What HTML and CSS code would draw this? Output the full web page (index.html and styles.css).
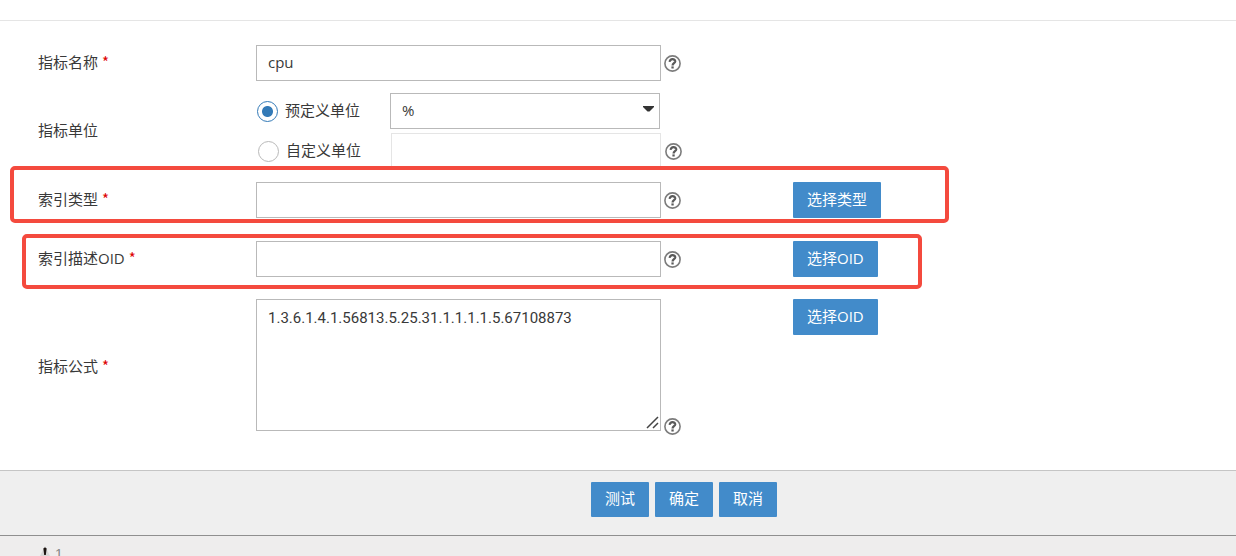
FILE: index.html
```
<!DOCTYPE html>
<html lang="zh-CN">
<head>
  <meta charset="UTF-8" />
  <meta name="viewport" content="width=device-width, initial-scale=1" />
  <title>指标设置</title>
  <link rel="stylesheet" href="styles.css">
</head>
<body>
  <svg class="symbols" aria-hidden="true">
    <symbol id="help" viewBox="0 0 17 17">
      <circle cx="8.5" cy="8.5" r="7.6" fill="#fff" stroke="#7c7c7c" stroke-width="1.6" />
      <path d="M5.8 6.9C5.6 3.4 11.3 3.4 11.2 6.4C11.1 8.2 8.6 8.2 8.6 10.4" fill="none" stroke="#5a5a5a" stroke-width="2.3" />
      <rect x="7.4" y="11.4" width="2.3" height="2.1" fill="#5a5a5a" />
    </symbol>
  </svg>

  <form class="page" onsubmit="return false;">
    <div class="top-line"></div>

    <main class="form">
      <div class="row">
        <label class="label" for="name">指标名称 <span class="required">*</span></label>
        <div class="field">
          <input class="text-box" type="text" id="name" name="name" value="cpu" />
          <svg class="help" role="img" aria-label="帮助"><use href="#help" /></svg>
        </div>
      </div>

      <div class="row row-unit" role="radiogroup" aria-labelledby="unit-label">
        <span class="label" id="unit-label">指标单位</span>
        <div class="units">
          <div class="field">
            <label class="radio"><input type="radio" name="unit" value="preset" checked /> <span>预定义单位</span></label>
            <div class="select-wrap">
              <select class="text-box" aria-label="预定义单位">
                <option>%</option>
              </select>
              <svg class="arrow" viewBox="0 0 11 6" aria-hidden="true"><path d="M0 0H11V1L6.5 5.5H4.5L0 1Z" fill="#333" /></svg>
            </div>
          </div>
          <div class="field field-custom">
            <label class="radio"><input type="radio" name="unit" value="custom" /> <span>自定义单位</span></label>
            <input class="text-box unit-box" type="text" aria-label="自定义单位" disabled />
            <svg class="help" role="img" aria-label="帮助"><use href="#help" /></svg>
          </div>
        </div>
      </div>

      <div class="row row-type">
        <label class="label" for="index-type">索引类型 <span class="required">*</span></label>
        <div class="field">
          <input class="text-box" type="text" id="index-type" name="index-type" />
          <svg class="help" role="img" aria-label="帮助"><use href="#help" /></svg>
        </div>
        <button class="btn" type="button">选择类型</button>
        <div class="mark mark-type"></div>
      </div>

      <div class="row row-oid">
        <label class="label" for="index-oid">索引描述OID <span class="required">*</span></label>
        <div class="field">
          <input class="text-box" type="text" id="index-oid" name="index-oid" />
          <svg class="help" role="img" aria-label="帮助"><use href="#help" /></svg>
        </div>
        <button class="btn" type="button">选择OID</button>
        <div class="mark mark-oid"></div>
      </div>

      <div class="row row-formula">
        <label class="label" for="formula">指标公式 <span class="required">*</span></label>
        <div class="field field-area">
          <textarea class="text-box area" id="formula" name="formula" spellcheck="false">1.3.6.1.4.1.56813.5.25.31.1.1.1.1.5.67108873</textarea>
          <svg class="help" role="img" aria-label="帮助"><use href="#help" /></svg>
        </div>
        <button class="btn" type="button">选择OID</button>
      </div>
    </main>

    <div class="actions">
      <button class="btn" type="button">测试</button>
      <button class="btn" type="submit">确定</button>
      <button class="btn" type="button">取消</button>
    </div>

    <footer class="status">
      <svg class="warning" viewBox="0 0 14 14" aria-hidden="true">
        <path d="M7 0L14 14H0Z" fill="#d8d8d8" />
        <path d="M5.4 2.5Q7 0.5 8.6 2.5L7.8 9H6.2Z" fill="#1d1512" />
      </svg>
      <span>1</span>
    </footer>
  </form>
</body>
</html>
```

FILE: styles.css
```
:root {
  --color-primary: #428bca;
  --color-radio: #337ab7;
  --color-text: #393939;
  --color-border: #b9b9b9;
  --color-required: #dd0000;
  --color-mark: #f44a3e;
  --color-bar: #efefef;
  --font-body: "Open Sans", "Noto Sans CJK SC", sans-serif;
}

*, *::before, *::after {
  box-sizing: border-box;
}

body {
  margin: 0;
  font-family: var(--font-body);
  font-size: 15px;
  line-height: 20px;
  color: var(--color-text);
  background: #fff;
}

.symbols {
  display: none;
}

.page {
  display: flex;
  flex-direction: column;
  height: 100vh;
}

.top-line {
  flex: none;
  height: 21px;
  border-bottom: 1px solid #e5e5e5;
}

.form {
  flex: none;
  padding: 24px 38px 35px;
}

.row {
  position: relative;
  display: grid;
  grid-template-columns: 218px minmax(0, 537px) 1fr;
  align-items: center;
}
.row-unit {
  margin-top: 12px;
}
.row-type {
  margin-top: 13px;
}
.row-oid {
  margin-top: 23px;
}
.row-formula {
  margin-top: 22px;
}

.label,
.radio span {
  padding-bottom: 2px;
}
.required {
  font-family: "Noto Sans CJK SC", sans-serif;
  color: var(--color-required);
}

.field {
  display: flex;
  align-items: center;
  gap: 3px;
}

.text-box {
  flex: 0 1 405px;
  min-width: 0;
  height: 36px;
  margin: 0;
  padding: 0 11px 2px;
  border: 1px solid var(--color-border);
  border-radius: 0;
  background: #fff;
  font: inherit;
  color: var(--color-text);
}
.unit-box {
  flex-basis: 270px;
}
.text-box:disabled {
  border-color: #e5e5e5;
}

.field-area {
  align-items: flex-end;
}
.area {
  height: 132px;
  margin-bottom: 4px;
  padding: 8px 11px;
  font-family: Roboto, sans-serif;
  resize: both;
}
.area::-webkit-resizer {
  background: url("data:image/svg+xml,%3Csvg xmlns='http://www.w3.org/2000/svg' width='15' height='15'%3E%3Cpath d='M2 13L13 2M8 13L13 8' stroke='%23444' stroke-width='1.5'/%3E%3C/svg%3E") no-repeat right bottom;
}

.help {
  flex: none;
  width: 17px;
  height: 17px;
}

.units {
  display: flex;
  flex-direction: column;
  gap: 4px;
}
.units .field {
  gap: 4px;
}
.field-custom {
  padding-left: 1px;
}

.radio {
  flex: none;
  display: flex;
  align-items: center;
  gap: 7px;
  width: 130px;
  padding-left: 1px;
}
.radio input {
  appearance: none;
  width: 21px;
  height: 21px;
  margin: 0;
  border: 1px solid var(--color-border);
  border-radius: 50%;
  background: #fff;
}
.radio input:checked {
  border-color: var(--color-radio);
  background: radial-gradient(circle, var(--color-radio) 5px, #fff 6px);
}

.select-wrap {
  position: relative;
  flex: 0 1 270px;
}
.select-wrap select {
  appearance: none;
  width: 100%;
}
.arrow {
  position: absolute;
  top: 13px;
  right: 6px;
  width: 11px;
  height: 6px;
  pointer-events: none;
}

.btn {
  align-self: start;
  justify-self: start;
  height: 36px;
  padding: 0 14px 3px;
  border: 0;
  border-radius: 1px;
  background: var(--color-primary);
  font: inherit;
  color: #fff;
  white-space: nowrap;
  cursor: pointer;
}

/* highlight frames drawn over the rows */
.mark {
  position: absolute;
  border: 4px solid var(--color-mark);
  border-radius: 5px;
  pointer-events: none;
}
.mark-type {
  top: -16px;
  bottom: -5px;
  left: -28px;
  width: 939px;
}
.mark-oid {
  top: -7px;
  bottom: -12px;
  left: -16px;
  width: 900px;
}

.actions {
  flex: none;
  display: flex;
  justify-content: center;
  gap: 6px;
  padding: 11px 0 18px 132px;
  border-top: 1px solid #c5c5c5;
  border-bottom: 1px solid #8f8f8f;
  background: var(--color-bar);
}
.actions .btn {
  height: 35px;
}

.status {
  flex: 1;
  display: flex;
  align-items: flex-start;
  gap: 3px;
  min-height: 0;
  padding: 10px 38px 0;
  overflow: hidden;
  background: #eeeded;
  font-family: "Liberation Sans", sans-serif;
  font-size: 14px;
  line-height: 16px;
  color: #888;
}
.warning {
  flex: none;
  width: 14px;
  height: 14px;
}
```
